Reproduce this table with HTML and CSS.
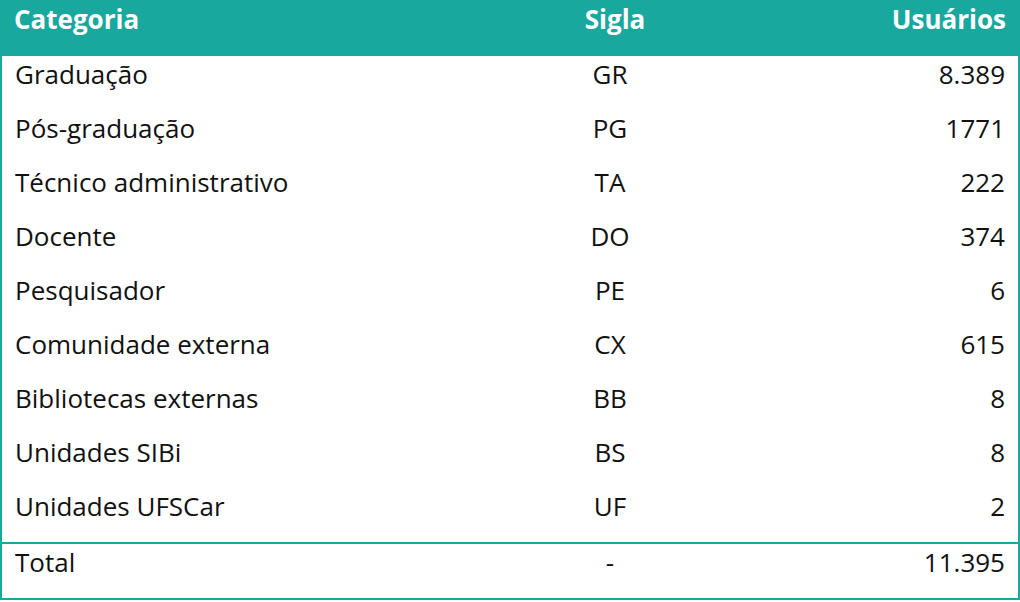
FILE: index.html
```html
<!DOCTYPE html>
<html lang="pt-BR">
<head>
<meta charset="utf-8">
<link rel="stylesheet" href="styles.css">
</head>
<body>
<div class="table">
  <div class="row head">
    <div class="cell c1">Categoria</div>
    <div class="cell c2">Sigla</div>
    <div class="cell c3">Usuários</div>
  </div>
  <div class="body">
    <div class="row"><div class="cell c1">Graduação</div><div class="cell c2">GR</div><div class="cell c3">8.389</div></div>
    <div class="row"><div class="cell c1">Pós-graduação</div><div class="cell c2">PG</div><div class="cell c3">1771</div></div>
    <div class="row"><div class="cell c1">Técnico administrativo</div><div class="cell c2">TA</div><div class="cell c3">222</div></div>
    <div class="row"><div class="cell c1">Docente</div><div class="cell c2">DO</div><div class="cell c3">374</div></div>
    <div class="row"><div class="cell c1">Pesquisador</div><div class="cell c2">PE</div><div class="cell c3">6</div></div>
    <div class="row"><div class="cell c1">Comunidade externa</div><div class="cell c2">CX</div><div class="cell c3">615</div></div>
    <div class="row"><div class="cell c1">Bibliotecas externas</div><div class="cell c2">BB</div><div class="cell c3">8</div></div>
    <div class="row"><div class="cell c1">Unidades SIBi</div><div class="cell c2">BS</div><div class="cell c3">8</div></div>
    <div class="row"><div class="cell c1">Unidades UFSCar</div><div class="cell c2">UF</div><div class="cell c3">2</div></div>
  </div>
  <div class="row total">
    <div class="cell c1">Total</div>
    <div class="cell c2">-</div>
    <div class="cell c3">11.395</div>
  </div>
</div>
</body>
</html>
```
FILE: styles.css
```css
html, body {
  margin: 0;
  padding: 0;
  background: #ffffff;
}
body {
  font-family: "Open Sans", "Noto Sans", sans-serif;
  font-size: 26px;
  color: #111111;
}
.table {
  width: 1020px;
}
.row {
  display: grid;
  grid-template-columns: 528px 160px 1fr;
  height: 54px;
  line-height: 36px;
}
.cell {
  padding: 0 13px;
  white-space: nowrap;
}
.c2 { text-align: center; }
.c3 { text-align: right; }
.head {
  height: 56px;
  background: #18a89d;
  color: #ffffff;
  font-weight: 700;
  grid-template-columns: 530px 160px 1fr;
  padding-top: 1px;
  box-sizing: border-box;
}
.head .c1 { padding-left: 14px; }
.head .c2 { padding-left: 10px; padding-right: 0; }
.head .c3 { padding-right: 14px; }
.body {
  border-left: 2px solid #18a89d;
  border-right: 2px solid #18a89d;
}
.total {
  border: 2px solid #18a89d;
  height: 54px;
}
```
